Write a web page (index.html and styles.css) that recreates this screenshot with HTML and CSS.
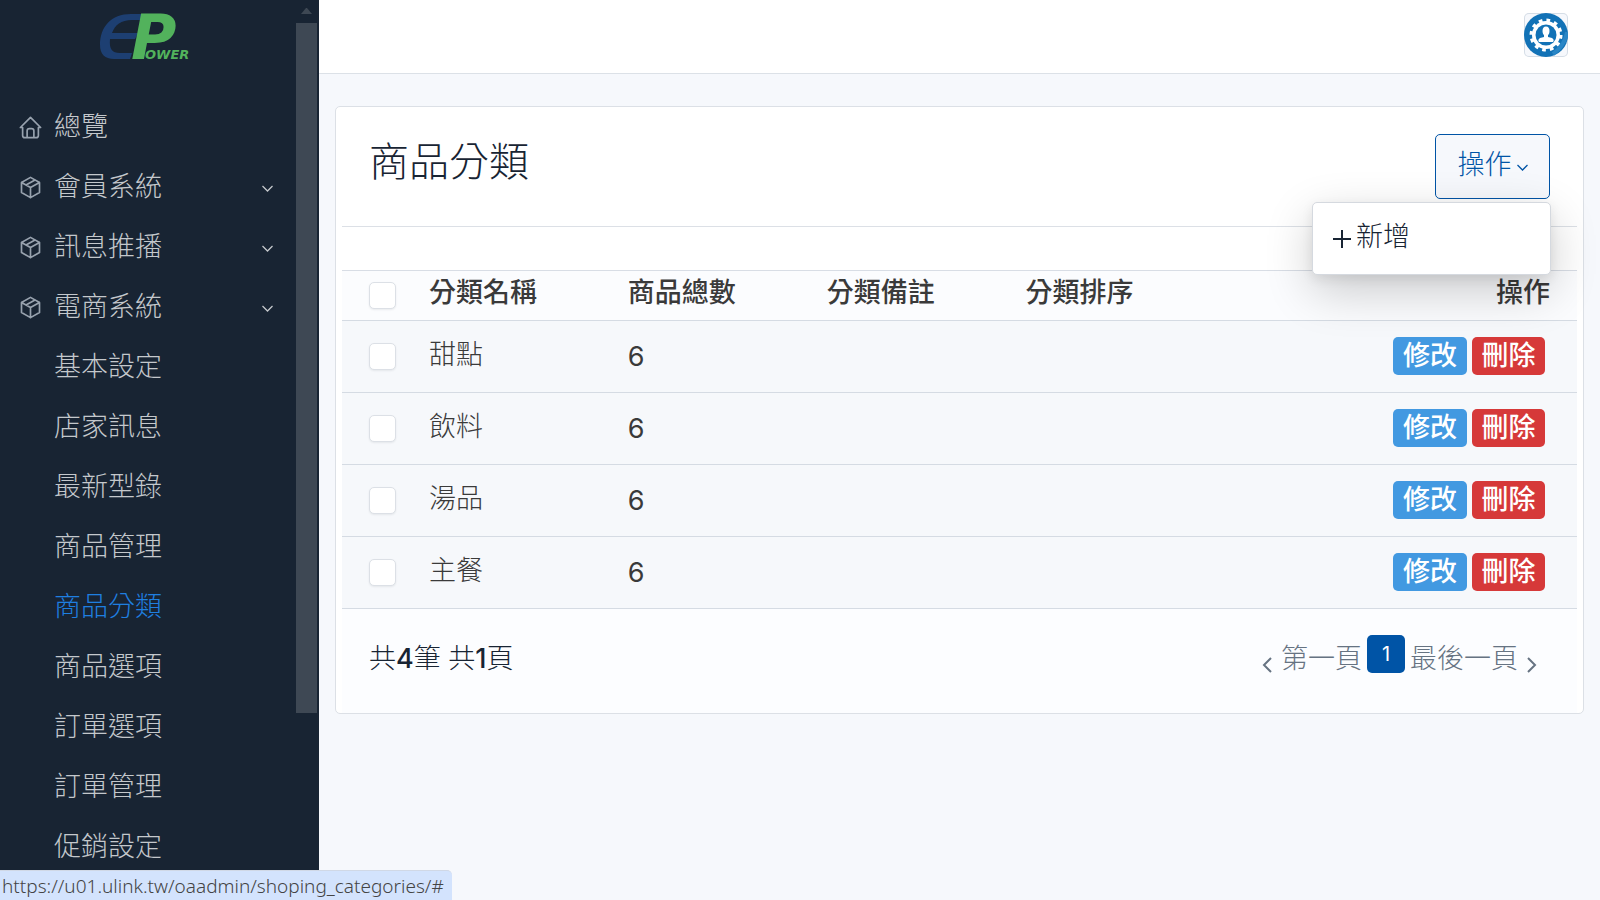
FILE: index.html
```html
<!DOCTYPE html>
<html lang="zh-Hant">
<head>
<meta charset="utf-8">
<meta name="viewport" content="width=device-width, initial-scale=1">
<title>商品分類</title>
<link rel="stylesheet" href="styles.css">
</head>
<body>
<svg class="sprite" aria-hidden="true">
  <symbol id="box" viewBox="0 0 24 24"><path d="M12 3l8 4.500v9l-8 4.500l-8 -4.500v-9zM12 12l8 -4.500M12 12v9M12 12l-8 -4.500M16 5.250l-8 4.500"/></symbol>
  <symbol id="home" viewBox="0 0 24 24"><path d="M5 12H3l9 -9l9 9h-2M5 12v7a2 2 0 0 0 2 2h10a2 2 0 0 0 2 -2v-7M9 21v-6a2 2 0 0 1 2 -2h2a2 2 0 0 1 2 2v6"/></symbol>
  <symbol id="down" viewBox="0 0 12 12"><path d="M2 4l4 4l4 -4"/></symbol>
</svg>
<div class="app">
  <aside class="sidebar">
    <a class="brand" href="#" aria-label="EPower">
      <svg class="logo" viewBox="0 0 90 48" aria-hidden="true">
        <path class="logo-e" d="M46 0H31C11 0 0 13 0 31c0 9 5 14 14 14h16l2 -6H20c-8 0 -11 -4 -10 -14h25l3 -6H12C15 11 21 6 32 6h11z"/>
        <text class="logo-p" x="31" y="45">P</text>
        <text class="logo-ower" x="45" y="45">OWER</text>
      </svg>
    </a>
    <nav class="nav">
      <a href="#"><svg class="icon"><use href="#home"/></svg><span>總覽</span></a>
      <a href="#"><svg class="icon"><use href="#box"/></svg><span>會員系統</span><svg class="chevron"><use href="#down"/></svg></a>
      <a href="#"><svg class="icon"><use href="#box"/></svg><span>訊息推播</span><svg class="chevron"><use href="#down"/></svg></a>
      <a href="#"><svg class="icon"><use href="#box"/></svg><span>電商系統</span><svg class="chevron"><use href="#down"/></svg></a>
      <a class="sub" href="#">基本設定</a>
      <a class="sub" href="#">店家訊息</a>
      <a class="sub" href="#">最新型錄</a>
      <a class="sub" href="#">商品管理</a>
      <a class="sub active" href="#" aria-current="page">商品分類</a>
      <a class="sub" href="#">商品選項</a>
      <a class="sub" href="#">訂單選項</a>
      <a class="sub" href="#">訂單管理</a>
      <a class="sub" href="#">促銷設定</a>
    </nav>
    <div class="scrollbar"><div class="arrow"></div><div class="thumb"></div></div>
  </aside>
  <div class="page">
    <header class="topbar">
      <button class="avatar" type="button" aria-label="帳號">
        <svg viewBox="0 0 44 44" aria-hidden="true">
          <circle cx="22" cy="22" r="22" fill="#1272b6"/>
          <path d="M29 41C37 35 42 27 43 19" fill="none" stroke="#2a86c6" stroke-width="4"/>
          <circle cx="22" cy="22" r="14" fill="#fff"/>
          <circle cx="22" cy="22" r="14.500" fill="none" stroke="#fff" stroke-width="4" stroke-dasharray="3.600 3.992"/>
          <circle cx="22" cy="22" r="10.500" fill="#1272b6"/>
          <ellipse cx="22" cy="18" rx="3.500" ry="4.500" fill="#fff"/>
          <path d="M20 21h4v3l4 1c2 1 2 3 1 4H15c-1 -1 -1 -3 1 -4l4 -1z" fill="#fff"/>
        </svg>
      </button>
    </header>
    <main class="content">
      <section class="card">
        <div class="card-header">
          <h1>商品分類</h1>
          <div class="dropdown">
            <button class="toggle" type="button" aria-expanded="true">操作<svg class="chevron"><use href="#down"/></svg></button>
            <div class="menu">
              <a href="#"><svg class="plus" viewBox="0 0 18 18"><path d="M9 0v18M0 9h18"/></svg>新增</a>
            </div>
          </div>
        </div>
        <div class="filters"></div>
        <table>
          <colgroup><col class="c-check"><col class="c-data"><col class="c-data"><col class="c-data"><col class="c-data"><col></colgroup>
          <thead>
            <tr><th><input type="checkbox" aria-label="全選"></th><th>分類名稱</th><th>商品總數</th><th>分類備註</th><th>分類排序</th><th class="end">操作</th></tr>
          </thead>
          <tbody>
            <tr><td><input type="checkbox" aria-label="甜點"></td><td>甜點</td><td class="num">6</td><td></td><td></td><td><div class="actions"><button class="edit" type="button">修改</button><button class="delete" type="button">刪除</button></div></td></tr>
            <tr><td><input type="checkbox" aria-label="飲料"></td><td>飲料</td><td class="num">6</td><td></td><td></td><td><div class="actions"><button class="edit" type="button">修改</button><button class="delete" type="button">刪除</button></div></td></tr>
            <tr><td><input type="checkbox" aria-label="湯品"></td><td>湯品</td><td class="num">6</td><td></td><td></td><td><div class="actions"><button class="edit" type="button">修改</button><button class="delete" type="button">刪除</button></div></td></tr>
            <tr><td><input type="checkbox" aria-label="主餐"></td><td>主餐</td><td class="num">6</td><td></td><td></td><td><div class="actions"><button class="edit" type="button">修改</button><button class="delete" type="button">刪除</button></div></td></tr>
          </tbody>
        </table>
        <div class="card-footer">
          <p>共<b>4</b>筆 共<b>1</b>頁</p>
          <nav class="pager" aria-label="分頁">
            <a href="#"><svg class="prev" viewBox="0 0 10 16"><path d="M9 1L2 8l7 7"/></svg>第一頁</a>
            <a class="current" href="#" aria-current="page">1</a>
            <a href="#">最後一頁<svg class="next" viewBox="0 0 10 16"><path d="M1 1l7 7l-7 7"/></svg></a>
          </nav>
        </div>
      </section>
    </main>
  </div>
</div>
<div class="status">https://u01.ulink.tw/oaadmin/shoping_categories/#</div>
</body>
</html>
```
FILE: styles.css
```css
* { box-sizing: border-box; }
body {
  margin: 0;
  background: #f6f8fc;
  color: #182433;
  font-family: Inter, "Noto Sans CJK TC", sans-serif;
  font-size: 27px;
  font-weight: 300;
  line-height: 38px;
}
a { color: inherit; text-decoration: none; }
button { font: inherit; cursor: pointer; }
svg { flex: none; fill: none; stroke: currentColor; }
.sprite { position: absolute; width: 0; height: 0; }
.app { display: flex; height: 100vh; overflow: hidden; }

.sidebar {
  position: relative;
  flex: none;
  width: 319px;
  overflow: hidden;
  background: #182433;
  color: #c4c8cc;
}
.brand { display: block; height: 94px; padding: 14px 0 0 100px; }
.logo { display: block; width: 90px; height: 48px; overflow: visible; stroke: none; }
.logo-e { fill: #1d3f72; }
.logo-p, .logo-ower { fill: #52b25c; font-family: "DejaVu Sans", sans-serif; font-weight: 700; font-style: italic; }
.logo-p { font-size: 62px; }
.logo-ower { font-size: 13px; }
.nav a { display: flex; align-items: center; height: 60px; padding: 6px 45px 0 17px; }
.nav .sub { padding-left: 54px; }
.nav span { padding-left: 10px; }
.nav .active { color: #1f7fe0; }
.icon { width: 27px; height: 27px; color: #98a2ae; stroke-width: 1.5px; stroke-linecap: round; stroke-linejoin: round; }
.chevron { width: 15px; height: 15px; margin-top: 6px; }
.nav .chevron { margin-right: -1px; margin-left: auto; margin-top: 3px; }
.scrollbar { position: absolute; top: 0; right: 2px; width: 21px; height: 100%; }
.arrow { width: 11px; margin: 8px auto 9px; border: solid transparent; border-width: 0 5px 6px; border-bottom-color: #3e4854; }
.thumb { height: 690px; max-height: 77%; background: #3e4854; }

.page { flex: 1; min-width: 0; }
.topbar {
  display: flex;
  align-items: center;
  justify-content: flex-end;
  height: 74px;
  padding: 0 32px 3px;
  background: #fff;
  border-bottom: 1px solid #dce1e7;
}
.avatar { width: 44px; height: 44px; padding: 0; border: 0; border-radius: 5px; background: #f6f8fc; box-shadow: inset 0 0 0 1px #d5dde6; }
.avatar svg { display: block; width: 44px; height: 44px; stroke: none; }

.content { padding: 32px 16px; }
.card { padding: 0 6px; border: 1px solid #dce0e6; border-radius: 5px; background: #fff; }
.card-header { display: flex; justify-content: space-between; align-items: flex-start; padding: 27px; border-bottom: 1px solid #dce0e6; }
h1 { margin: 0; font-size: 40px; font-weight: 300; line-height: 56px; }
.dropdown { position: relative; }
.toggle {
  display: flex;
  align-items: center;
  justify-content: center;
  gap: 3px;
  width: 115px;
  height: 65px;
  padding: 0 0 4px 2px;
  border: 1px solid #0054a6;
  border-radius: 5px;
  background: #f6f8fc;
  color: #0054a6;
}
.menu {
  position: absolute;
  top: 68px;
  right: -1px;
  width: 239px;
  height: 73px;
  padding: 15px 20px;
  border: 1px solid #d5d9df;
  border-radius: 5px;
  background: #fff;
  box-shadow: 0 16px 48px rgba(0, 0, 0, 0.2), 0 4px 12px rgba(0, 0, 0, 0.08);
}
.menu a { display: flex; align-items: center; gap: 5px; }
.plus { width: 18px; height: 18px; margin-top: 3px; stroke-width: 2px; }
.filters { height: 43px; }

table { width: 100%; table-layout: fixed; border-spacing: 0; border-top: 1px solid #d8dde5; color: #3a3a3a; }
.c-check { width: 70px; }
.c-data { width: 16.1%; }
th, td { padding: 0 17px; border-bottom: 1px solid #d5dbe3; text-align: left; }
th { height: 50px; padding-bottom: 6px; background: #fbfcfe; font-weight: 500; }
td { height: 72px; background: #f6f8fb; }
th:first-child, td:first-child { padding: 0 0 0 27px; }
td:nth-child(2) { padding-bottom: 4px; }
.num { font-weight: 400; }
th.end { padding-right: 27px; text-align: right; }
td:last-child { padding-right: 32px; padding-bottom: 2px; }
input { display: block; width: 27px; height: 27px; margin: 0; appearance: none; border: 1px solid #dce0e6; border-radius: 5px; background: #fff; box-shadow: 0 1px 2px rgba(24, 36, 51, 0.08); }
.actions { display: flex; justify-content: flex-end; gap: 5px; }
.actions button { width: 73px; height: 38px; padding: 0; border: 0; border-radius: 5px; color: #fff; font-weight: 500; line-height: 36px; }
.actions .edit { width: 74px; background: #4299e1; }
.actions .delete { background: #d63939; }

.card-footer { display: flex; justify-content: space-between; align-items: flex-start; padding: 26px 40px 30px 27px; background: #fcfdff; }
.card-footer p { margin: 5px 0 0; }
b { font-weight: 500; }
.pager { display: flex; gap: 5px; color: #667382; }
.pager a { display: flex; align-items: center; gap: 9px; height: 48px; }
.pager .current { justify-content: center; width: 38px; height: 38px; border-radius: 5px; background: #0054a6; color: #fff; font-size: 20px; font-weight: 400; }
.prev, .next { width: 10px; height: 16px; margin-top: 12px; stroke-width: 2px; }

.status {
  position: fixed;
  left: 0;
  bottom: 0;
  padding: 1px 8px 0 2px;
  border-top: 1px solid #d0d8e6;
  border-radius: 0 5px 0 0;
  background: #d3e3fd;
  color: #444;
  font-family: "Noto Sans", sans-serif;
  font-size: 19px;
  line-height: 28px;
}
```
